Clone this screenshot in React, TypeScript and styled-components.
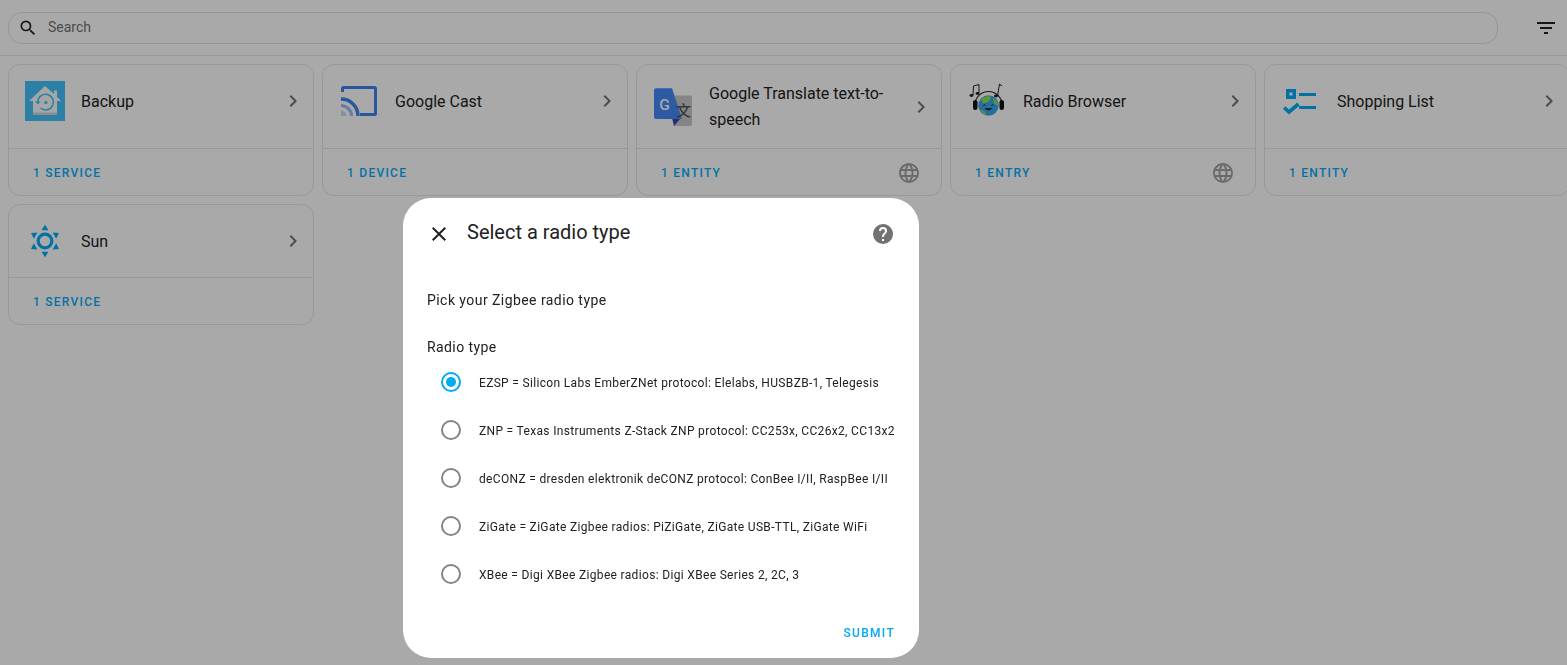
import styled, { createGlobalStyle } from "styled-components";
import type { ReactNode } from "react";

const PATHS = {
  search:
    "M9.5,3A6.5,6.5 0 0,1 16,9.5C16,11.11 15.41,12.59 14.44,13.73L14.71,14H15.5L20.5,19L19,20.5L14,15.5V14.71L13.73,14.44C12.59,15.41 11.11,16 9.5,16A6.5,6.5 0 0,1 3,9.5A6.5,6.5 0 0,1 9.5,3M9.5,5C7,5 5,7 5,9.5C5,12 7,14 9.5,14C12,14 14,12 14,9.5C14,7 12,5 9.5,5Z",
  filter: "M6,13H18V11H6M3,6V8H21V6M10,18H14V16H10V18Z",
  chevron: "M8.59,16.58L13.17,12L8.59,7.41L10,6L16,12L10,18L8.59,16.58Z",
  web: "M16.36,14C16.44,13.34 16.5,12.68 16.5,12C16.5,11.32 16.44,10.66 16.36,10H19.74C19.9,10.64 20,11.31 20,12C20,12.69 19.9,13.36 19.74,14M14.59,19.56C15.19,18.45 15.65,17.25 15.97,16H18.92C17.96,17.65 16.43,18.93 14.59,19.56M14.34,14H9.66C9.56,13.34 9.5,12.68 9.5,12C9.5,11.32 9.56,10.65 9.66,10H14.34C14.43,10.65 14.5,11.32 14.5,12C14.5,12.68 14.43,13.34 14.34,14M12,19.96C11.17,18.76 10.5,17.43 10.09,16H13.91C13.5,17.43 12.83,18.76 12,19.96M8,8H5.08C6.03,6.34 7.57,5.06 9.4,4.44C8.8,5.55 8.35,6.75 8,8M5.08,16H8C8.35,17.25 8.8,18.45 9.4,19.56C7.57,18.93 6.03,17.65 5.08,16M4.26,14C4.1,13.36 4,12.69 4,12C4,11.31 4.1,10.64 4.26,10H7.64C7.56,10.66 7.5,11.32 7.5,12C7.5,12.68 7.56,13.34 7.64,14M12,4.03C12.83,5.23 13.5,6.57 13.91,8H10.09C10.5,6.57 11.17,5.23 12,4.03M18.92,8H15.97C15.65,6.75 15.19,5.55 14.59,4.44C16.43,5.07 17.96,6.34 18.92,8M12,2C6.47,2 2,6.5 2,12A10,10 0 0,0 12,22A10,10 0 0,0 22,12A10,10 0 0,0 12,2Z",
  close:
    "M19,6.41L17.59,5L12,10.59L6.41,5L5,6.41L10.59,12L5,17.59L6.41,19L12,13.41L17.59,19L19,17.59L13.41,12L19,6.41Z",
  help: "M15.07,11.25L14.17,12.17C13.45,12.89 13,13.5 13,15H11V14.5C11,13.39 11.45,12.39 12.17,11.67L13.41,10.41C13.78,10.05 14,9.55 14,9C14,7.89 13.1,7 12,7A2,2 0 0,0 10,9H8A4,4 0 0,1 12,5A4,4 0 0,1 16,9C16,9.88 15.64,10.67 15.07,11.25M13,19H11V17H13M12,2A10,10 0 0,0 2,12A10,10 0 0,0 12,22A10,10 0 0,0 22,12C22,6.47 17.5,2 12,2Z",
};

function Icon({ d, size = 24, color }: { d: string; size?: number; color: string }) {
  return (
    <svg width={size} height={size} viewBox="0 0 24 24" fill={color} style={{ flexShrink: 0 }}>
      <path d={d} />
    </svg>
  );
}

function Logo({ children }: { children: ReactNode }) {
  return (
    <svg width="40" height="40" viewBox="0 0 40 40" style={{ flexShrink: 0 }}>
      {children}
    </svg>
  );
}

const BackupLogo = () => (
  <Logo>
    <rect width="40" height="40" fill="#41bdf5" />
    <path d="M20 5 L29 13 V9.5 H32 V16 L36 20 H32 V32 Q32 34 30 34 H10 Q8 34 8 32 V20 H4 Z" fill="#f5f5f5" />
    <path d="M8 32 Q8 34 10 34 H30 Q32 34 32 32 V31.5 H8 Z" fill="#d0d0d0" />
    <path d="M12.8 21 A7.8 7.8 0 1 1 15.5 27" fill="none" stroke="#41bdf5" strokeWidth="1.5" />
    <path d="M10 20.5 H15.6 L12.8 23.6 Z" fill="#41bdf5" />
    <circle cx="20.8" cy="21.5" r="1.6" fill="#41bdf5" />
  </Logo>
);

const CastLogo = () => (
  <Logo>
    <path
      d="M3.5 11 V7.5 Q3.5 6.5 4.5 6.5 H35.5 Q36.5 6.5 36.5 7.5 V32.5 Q36.5 33.5 35.5 33.5 H21"
      fill="none"
      stroke="#3f7fe8"
      strokeWidth="3"
    />
    <path d="M2 18 A17 17 0 0 1 19 35" fill="none" stroke="#3f7fe8" strokeWidth="3.4" />
    <path d="M2 24.5 A10.5 10.5 0 0 1 12.5 35" fill="none" stroke="#9db8ea" strokeWidth="3.2" />
    <path d="M2 29.5 A5.5 5.5 0 0 1 7.5 35 H2 Z" fill="#c5d3ee" />
  </Logo>
);

const TranslateLogo = () => (
  <Logo>
    <path d="M20 8.5 H37 Q39 8.5 39 10.5 V37 Q39 39 37 39 H21 L16 24 Z" fill="#c4c4c4" />
    <path d="M19.5 32 H27 L21 39 Z" fill="#3b3fa8" />
    <path d="M3 1.2 H19 L29 32 H3 Q1 32 1 30 V3.2 Q1 1.2 3 1.2 Z" fill="#4285f4" />
    <LogoLetter x="11.5" y="22.5" fontSize="15.5" fill="#f5f5f5">
      G
    </LogoLetter>
    <LogoLetter x="30.4" y="29" fontSize="15" fill="#555">
      文
    </LogoLetter>
  </Logo>
);

const RadioBrowserLogo = () => (
  <Logo>
    <circle cx="21.5" cy="24.5" r="10.2" fill="#35a2e6" />
    <path d="M14 18 Q19 14 24 16 L22 20.5 L16 22.5 Z" fill="#8fdc55" />
    <path d="M26 17 Q31 20 31 25 L27 22.5 Z" fill="#8fdc55" />
    <path d="M13 28 L18 31 L19 34 Q15 32.5 13 28 Z" fill="#8fdc55" />
    <path d="M16.4 24.5 Q17.5 23 18.6 24.5" fill="none" stroke="#111" strokeWidth="0.9" />
    <path d="M24.4 24.5 Q25.5 23 26.6 24.5" fill="none" stroke="#111" strokeWidth="0.9" />
    <path d="M17.5 27.2 Q21.5 31.5 25.5 27.2 Z" fill="#111" />
    <path d="M8 24 A13.5 13.5 0 0 1 35 24" fill="none" stroke="#222" strokeWidth="1.1" />
    <rect x="6" y="19" width="4.5" height="10" rx="2.2" fill="#111" />
    <rect x="32.5" y="19" width="4.5" height="10" rx="2.2" fill="#111" />
    <ellipse cx="4.5" cy="14.5" rx="2" ry="1.4" fill="#222" />
    <ellipse cx="10.5" cy="12.5" rx="2" ry="1.4" fill="#222" />
    <path d="M6 14 L6.5 5 L12 3.5 L12 12" fill="none" stroke="#222" strokeWidth="1" />
    <ellipse cx="29" cy="15" rx="2" ry="1.4" fill="#222" />
    <path d="M30.5 15 L32.5 3 L35 5" fill="none" stroke="#222" strokeWidth="1" />
  </Logo>
);

const ShoppingLogo = () => (
  <Logo>
    <path fillRule="evenodd" d="M5 8 H15 V18 H5 Z M8.5 11.5 V14.5 H11.5 V11.5 Z" fill="#03a9f4" />
    <rect x="18" y="12" width="17" height="3" fill="#03a9f4" />
    <rect x="18" y="25" width="17" height="3" fill="#03a9f4" />
    <path d="M3.2 26.5 L8 31 L17.5 23" fill="none" stroke="#03a9f4" strokeWidth="3.6" />
  </Logo>
);

const SunLogo = () => (
  <Logo>
    <circle cx="20" cy="20" r="6.8" fill="none" stroke="#03a9f4" strokeWidth="3.2" />
    {[0, 60, 120, 180, 240, 300].map((angle) => (
      <path key={angle} d="M20 3.8 L23.5 9.2 H16.5 Z" fill="#03a9f4" transform={`rotate(${angle} 20 20)`} />
    ))}
  </Logo>
);

const INTEGRATIONS = [
  { name: "Backup", logo: <BackupLogo />, count: "1 SERVICE", cloud: false, wraps: false },
  { name: "Google Cast", logo: <CastLogo />, count: "1 DEVICE", cloud: false, wraps: false },
  { name: "Google Translate text-to-speech", logo: <TranslateLogo />, count: "1 ENTITY", cloud: true, wraps: true },
  { name: "Radio Browser", logo: <RadioBrowserLogo />, count: "1 ENTRY", cloud: true, wraps: false },
  { name: "Shopping List", logo: <ShoppingLogo />, count: "1 ENTITY", cloud: false, wraps: false },
  { name: "Sun", logo: <SunLogo />, count: "1 SERVICE", cloud: false, wraps: false },
];

const RADIO_TYPES = [
  "EZSP = Silicon Labs EmberZNet protocol: Elelabs, HUSBZB-1, Telegesis",
  "ZNP = Texas Instruments Z-Stack ZNP protocol: CC253x, CC26x2, CC13x2",
  "deCONZ = dresden elektronik deCONZ protocol: ConBee I/II, RaspBee I/II",
  "ZiGate = ZiGate Zigbee radios: PiZiGate, ZiGate USB-TTL, ZiGate WiFi",
  "XBee = Digi XBee Zigbee radios: Digi XBee Series 2, 2C, 3",
];

export default function App() {
  return (
    <>
      <GlobalStyle />
      <Page>
        <Header>
          <SearchBox>
            <Icon d={PATHS.search} size={20} color="#212121" />
            <SearchText>Search</SearchText>
          </SearchBox>
          <Icon d={PATHS.filter} color="#212121" />
        </Header>
        <CardGrid>
          {INTEGRATIONS.map((item) => (
            <Card key={item.name}>
              <CardTop>
                <CardRow>
                  {item.logo}
                  <CardTitle $wraps={item.wraps}>{item.name}</CardTitle>
                  <Icon d={PATHS.chevron} color="#727272" />
                </CardRow>
              </CardTop>
              <CardFooter>
                <CountLink>{item.count}</CountLink>
                {item.cloud && <Icon d={PATHS.web} color="#9e9e9e" />}
              </CardFooter>
            </Card>
          ))}
        </CardGrid>
      </Page>
      <Scrim />
      <Dialog>
        <DialogHeader>
          <Icon d={PATHS.close} color="#212121" />
          <DialogTitle>Select a radio type</DialogTitle>
          <Icon d={PATHS.help} color="#727272" />
        </DialogHeader>
        <DialogBody>
          <Description>Pick your Zigbee radio type</Description>
          <FieldLabel>Radio type</FieldLabel>
          <RadioList>
            {RADIO_TYPES.map((label, i) => (
              <RadioRow key={label}>
                <RadioCircle $selected={i === 0} />
                <RadioLabel>{label}</RadioLabel>
              </RadioRow>
            ))}
          </RadioList>
        </DialogBody>
        <DialogFooter>
          <SubmitButton>SUBMIT</SubmitButton>
        </DialogFooter>
      </Dialog>
    </>
  );
}

const GlobalStyle = createGlobalStyle`
  html, body {
    margin: 0;
    height: 100%;
    overflow: hidden;
    background: #fafafa;
    font-family: Roboto, "Noto Sans", sans-serif;
  }
`;

const LogoLetter = styled.text`
  font-family: Roboto, "Noto Sans CJK SC", sans-serif;
  font-weight: 500;
  text-anchor: middle;
`;

const Page = styled.div`
  height: 100vh;
  overflow: hidden;
`;

const Header = styled.div`
  height: 55px;
  display: flex;
  align-items: center;
  gap: 36px;
  padding: 0 9px 0 8px;
  border-bottom: 1px solid #e0e0e0;
`;

const SearchBox = styled.div`
  flex: 1;
  height: 32px;
  box-sizing: border-box;
  display: flex;
  align-items: center;
  gap: 10px;
  padding-left: 9px;
  border: 1px solid #dcdcdc;
  border-radius: 14px;
`;

const SearchText = styled.span`
  margin-bottom: 2px;
  font-size: 14px;
  color: #6f6f6f;
`;

const CardGrid = styled.div`
  display: grid;
  grid-template-columns: repeat(5, 306px);
  gap: 8px;
  padding: 8px;
  width: max-content;
`;

const Card = styled.div`
  display: flex;
  flex-direction: column;
  background: #fafafa;
  border: 1px solid #e0e0e0;
  border-radius: 12px;
`;

const CardTop = styled.div`
  flex: 1;
`;

const CardRow = styled.div`
  display: flex;
  align-items: center;
  gap: 16px;
  padding: 16px 8px 16px 16px;
`;

const CardTitle = styled.div<{ $wraps: boolean }>`
  flex: 1;
  box-sizing: border-box;
  min-height: 40px;
  display: flex;
  align-items: center;
  padding-top: ${(p) => (p.$wraps ? "0" : "2px")};
  font-size: 16px;
  line-height: 25.6px;
  color: #212121;
`;

const CardFooter = styled.div`
  height: 44px;
  display: flex;
  align-items: center;
  justify-content: space-between;
  padding: 2px 20px 0 24px;
  border-top: 1px solid #e0e0e0;
`;

const CountLink = styled.span`
  font-size: 12px;
  font-weight: 500;
  letter-spacing: 1.25px;
  color: #03a9f4;
`;

const Scrim = styled.div`
  position: fixed;
  inset: 0;
  background: rgba(0, 0, 0, 0.32);
`;

const Dialog = styled.div`
  position: fixed;
  left: 403px;
  top: 198px;
  width: 516px;
  height: 460px;
  display: flex;
  flex-direction: column;
  background: #fff;
  border-radius: 28px;
  overflow: hidden;
`;

const DialogHeader = styled.div`
  height: 72px;
  flex-shrink: 0;
  display: flex;
  align-items: center;
  gap: 16px;
  padding: 0 24px;
`;

const DialogTitle = styled.div`
  flex: 1;
  margin-top: -4px;
  font-size: 20px;
  color: #212121;
`;

const DialogBody = styled.div`
  flex: 1;
  padding: 20px 24px 0;
`;

const Description = styled.div`
  font-size: 14px;
  line-height: 20px;
  letter-spacing: 0.44px;
  color: #212121;
`;

const FieldLabel = styled.div`
  margin-top: 27px;
  font-size: 14px;
  line-height: 20px;
  letter-spacing: 0.4px;
  color: #212121;
`;

const RadioList = styled.div`
  margin-top: 1px;
`;

const RadioRow = styled.div`
  height: 48px;
  display: flex;
  align-items: center;
  gap: 18px;
  padding-left: 14px;
`;

const RadioCircle = styled.span<{ $selected: boolean }>`
  width: 20px;
  height: 20px;
  flex-shrink: 0;
  box-sizing: border-box;
  display: flex;
  align-items: center;
  justify-content: center;
  border: 2px solid ${(p) => (p.$selected ? "#03a9f4" : "#858585")};
  border-radius: 50%;

  &::after {
    content: "";
    display: ${(p) => (p.$selected ? "block" : "none")};
    width: 10px;
    height: 10px;
    border-radius: 50%;
    background: #03a9f4;
  }
`;

const RadioLabel = styled.span`
  padding-top: 2px;
  font-size: 12px;
  letter-spacing: 0.33px;
  white-space: nowrap;
  color: #212121;
`;

const DialogFooter = styled.div`
  height: 60px;
  flex-shrink: 0;
  box-sizing: border-box;
  display: flex;
  justify-content: flex-end;
  align-items: center;
  padding: 10px 24px 0;
`;

const SubmitButton = styled.span`
  font-size: 12px;
  font-weight: 500;
  letter-spacing: 1.3px;
  color: #03a9f4;
`;
